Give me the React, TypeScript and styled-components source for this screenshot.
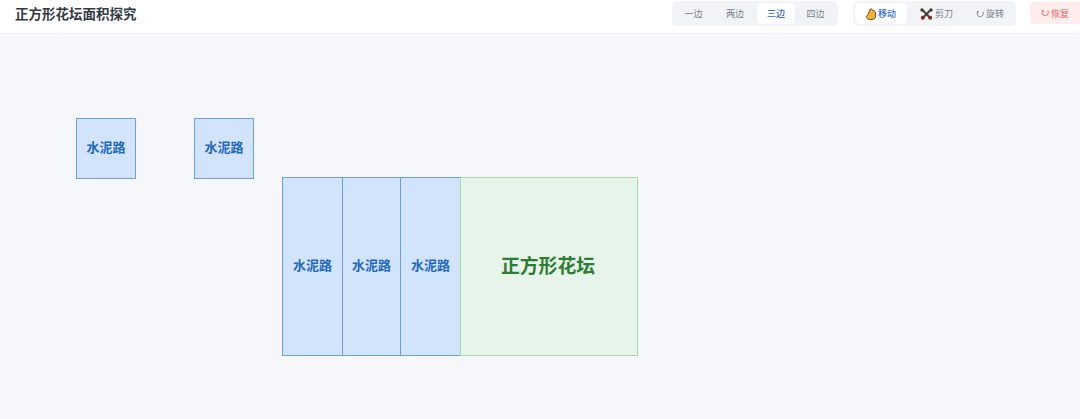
import styled, { createGlobalStyle } from "styled-components";

const GlobalStyle = createGlobalStyle`
  html, body {
    margin: 0;
    padding: 0;
    background: #f5f7fb;
    font-family: "Inter", "Noto Sans CJK SC", sans-serif;
  }
`;

const Page = styled.div`
  width: 1080px;
  height: 419px;
  overflow: hidden;
  display: flex;
  flex-direction: column;
`;

const Header = styled.header`
  height: 32px;
  flex-shrink: 0;
  background: #fff;
  border-bottom: 1px solid #eef0f4;
  display: flex;
  align-items: flex-start;
  padding: 1px 0 0 15px;
  box-sizing: content-box;
`;

const Title = styled.h1`
  margin: 3px 0 0;
  font-size: 13.5px;
  line-height: 20px;
  font-weight: 700;
  color: #333a45;
  flex: 1;
`;

const Group = styled.div`
  display: flex;
  height: 25px;
  box-sizing: border-box;
  padding: 2px;
  background: #f1f3f6;
  border-radius: 6px;
  margin-right: 14px;

  & + & {
    margin-left: 1px;
  }
`;

const Tab = styled.button<{ $active?: boolean; $width: number }>`
  width: ${(p) => p.$width}px;
  border: 0;
  padding: 0;
  display: flex;
  align-items: center;
  justify-content: center;
  gap: 2px;
  font-family: inherit;
  font-size: 9px;
  font-weight: ${(p) => (p.$active ? 500 : 400)};
  border-radius: 5px;
  color: ${(p) => (p.$active ? "#3565e0" : "#7b808a")};
  background: ${(p) => (p.$active ? "#fff" : "transparent")};
`;

const ResetButton = styled.button`
  width: 50px;
  height: 22px;
  border: 0;
  padding: 0;
  margin-top: 1px;
  background: #ffecec;
  border-radius: 4px 0 0 4px;
  color: #ee6464;
  font-family: inherit;
  font-size: 9px;
  display: flex;
  align-items: center;
  justify-content: center;
  gap: 2px;
`;

const Canvas = styled.main`
  position: relative;
  flex: 1;
`;

const Road = styled.div`
  box-sizing: border-box;
  display: flex;
  align-items: center;
  justify-content: center;
  padding-bottom: 5px;
  background: #d2e3fc;
  border: 1px solid #6f9fd8;
  color: #1f69c1;
  font-size: 13px;
  font-weight: 700;
`;

const LooseRoad = styled(Road)<{ $left: number }>`
  position: absolute;
  left: ${(p) => p.$left}px;
  top: 84px;
  width: 60px;
  height: 61px;
`;

const Assembly = styled.div`
  position: absolute;
  left: 282px;
  top: 143px;
  height: 179px;
  display: flex;
`;

const Strip = styled(Road)<{ $width: number }>`
  width: ${(p) => p.$width}px;
  height: 100%;
  margin-right: -1px;
`;

const Flowerbed = styled.div`
  width: 178px;
  box-sizing: border-box;
  display: flex;
  align-items: center;
  justify-content: center;
  padding: 0 2px 5px 0;
  background: #e6f4ea;
  border: 1px solid #a3d9a5;
  color: #2e7d32;
  font-size: 18.8px;
  font-weight: 700;
`;

const HandIcon = () => (
  <svg width="10" height="12" viewBox="0 0 10 12">
    <path
      d="M3.500 11.500C1.500 11.500.5 10 .5 8.200L2 6.500 3.800 1.800c.4-1.400 2.400-1.200 2.500.3.900-.2 1.500.2 1.500 1 .9 0 1.700.6 1.700 1.700V8c0 2.300-1.500 3.500-3.200 3.500z"
      fill="#f2b135"
      stroke="#5f4312"
      strokeWidth="0.9"
    />
  </svg>
);

const ScissorsIcon = () => (
  <svg width="13" height="12" viewBox="0 0 13 12">
    <path d="M2 1.500 9.800 9.500M11 1.500 3.200 9.500" stroke="#4d3f3a" strokeWidth="2" />
    <circle cx="2.800" cy="9.700" r="2" fill="#7a2f22" />
    <circle cx="10.200" cy="9.700" r="2" fill="#7a2f22" />
    <circle cx="2" cy="2" r="1.700" fill="#4a3a34" />
    <circle cx="11" cy="2" r="1.700" fill="#4a3a34" />
  </svg>
);

const RotateIcon = ({ color }: { color: string }) => (
  <svg width="8" height="8" viewBox="0 0 8 8" fill="none">
    <path d="M6.800 1.800A3.100 3.100 0 1 1 1.400 2.400" stroke={color} strokeWidth="0.9" />
    <path d="M.4 1.200 2.800 1 2.200 3.400z" fill={color} />
  </svg>
);

export default function App() {
  return (
    <>
      <GlobalStyle />
      <Page>
        <Header>
          <Title>正方形花坛面积探究</Title>
          <Group>
            <Tab $width={39}>一边</Tab>
            <Tab $width={44}>两边</Tab>
            <Tab $width={38} $active>三边</Tab>
            <Tab $width={41}>四边</Tab>
          </Group>
          <Group>
            <Tab $width={52} $active><HandIcon />移动</Tab>
            <Tab $width={59}><ScissorsIcon />剪刀</Tab>
            <Tab $width={48}><RotateIcon color="#7b808a" />旋转</Tab>
          </Group>
          <ResetButton><RotateIcon color="#ee6464" />恢复</ResetButton>
        </Header>
        <Canvas>
          <LooseRoad $left={76}>水泥路</LooseRoad>
          <LooseRoad $left={194}>水泥路</LooseRoad>
          <Assembly>
            <Strip $width={61}>水泥路</Strip>
            <Strip $width={59}>水泥路</Strip>
            <Strip $width={61}>水泥路</Strip>
            <Flowerbed>正方形花坛</Flowerbed>
          </Assembly>
        </Canvas>
      </Page>
    </>
  );
}
